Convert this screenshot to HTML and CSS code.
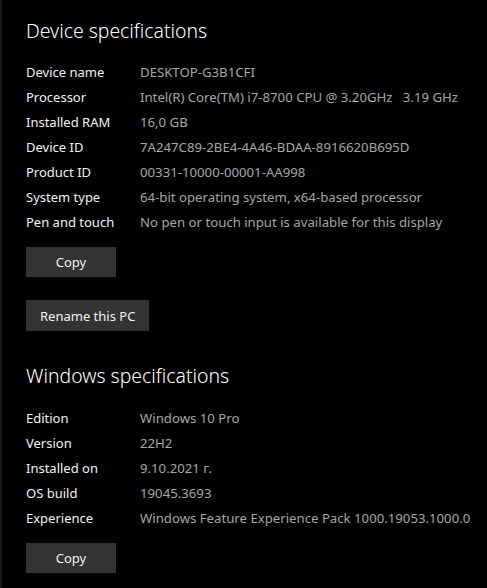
FILE: index.html
```html
<!DOCTYPE html>
<html lang="en">
<head>
    <meta charset="UTF-8">
    <meta name="viewport" content="width=device-width, initial-scale=1.0">
    <title>About</title>
    <link rel="stylesheet" href="styles.css">
</head>
<body>
    <div class="page">
        <section class="specs device-specs">
            <h2 class="specs-title">Device specifications</h2>
            <dl class="spec-list">
                <dt>Device name</dt><dd>DESKTOP-G3B1CFI</dd>
                <dt>Processor</dt><dd>Intel(R) Core(TM) i7-8700 CPU @ 3.20GHz&nbsp;&nbsp;&nbsp;3.19 GHz</dd>
                <dt>Installed RAM</dt><dd>16,0 GB</dd>
                <dt>Device ID</dt><dd>7A247C89-2BE4-4A46-BDAA-8916620B695D</dd>
                <dt>Product ID</dt><dd>00331-10000-00001-AA998</dd>
                <dt>System type</dt><dd>64-bit operating system, x64-based processor</dd>
                <dt>Pen and touch</dt><dd>No pen or touch input is available for this display</dd>
            </dl>
            <button class="btn copy-button">Copy</button>
            <button class="btn rename-button">Rename this PC</button>
        </section>

        <section class="specs windows-specs">
            <h2 class="specs-title">Windows specifications</h2>
            <dl class="spec-list">
                <dt>Edition</dt><dd>Windows 10 Pro</dd>
                <dt>Version</dt><dd>22H2</dd>
                <dt>Installed on</dt><dd>9.10.2021 г.</dd>
                <dt>OS build</dt><dd>19045.3693</dd>
                <dt>Experience</dt><dd>Windows Feature Experience Pack 1000.19053.1000.0</dd>
            </dl>
            <button class="btn copy-button">Copy</button>
        </section>
    </div>
</body>
</html>
```

FILE: styles.css
```css
body {
    margin: 0;
    padding: 0;
    background-color: #000;
    color: #fff;
    font-family: "Noto Sans", "Open Sans", sans-serif;
}

.page {
    min-height: 588px;
    box-sizing: border-box;
    border-left: 2px solid #161616; /* thin edge of the window */
    padding-left: 24px;
    padding-top: 17px;
}

.specs {
    display: flex;
    flex-direction: column;
    align-items: flex-start;
}

.windows-specs {
    margin-top: 31px;
}

.specs-title {
    margin: 0;
    font-size: 19.4px;
    font-weight: 300;
    line-height: 28px;
    color: #fff;
}

.spec-list {
    display: grid;
    grid-template-columns: 114px 1fr;
    grid-auto-rows: 25px;
    align-items: center;
    margin: 14px 0 13px 0;
    font-size: 13px;
}

.windows-specs .spec-list {
    margin-top: 15px;
    margin-bottom: 13px;
}

.spec-list dt {
    color: #f2f2f2;
    white-space: nowrap;
}

.spec-list dd {
    margin: 0;
    color: #a6a6a6;
    font-size: 13.2px;
    white-space: nowrap;
}

.btn {
    height: 30px;
    border: none;
    background-color: #333;
    color: #f2f2f2;
    font-family: inherit;
    font-size: 13px;
    padding: 0 14px;
    cursor: pointer;
}

.copy-button {
    width: 90px;
}

.rename-button {
    margin-top: 23px;
    height: 31px;
}
```
